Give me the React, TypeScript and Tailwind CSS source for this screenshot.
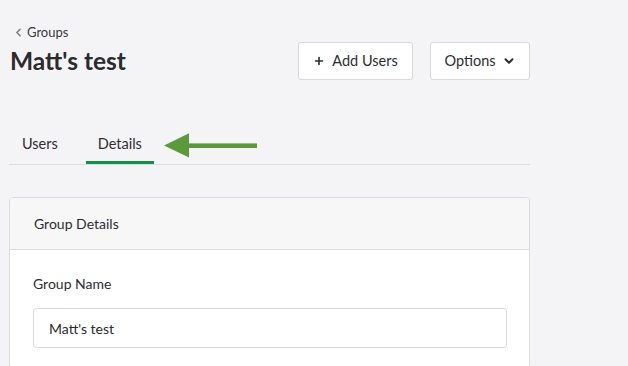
import { ChevronLeft, ChevronDown, Plus } from 'lucide-react';

function PointerArrow() {
  return (
    <svg width="94" height="26" viewBox="0 0 94 26" className="absolute left-[155px] top-[-1px]">
      <polygon points="0,12.4 25,0.3 25,24.4" fill="#5b9a3b" />
      <rect x="24" y="10.4" width="69" height="4.6" fill="#5b9a3b" />
    </svg>
  );
}

export default function App() {
  return (
    <div className="min-h-[366px] w-full bg-[#f4f4f6] pl-[9px] pt-[24px] text-[#2d2d2f] font-['Lato','Liberation_Sans',sans-serif]">
      <div className="w-[521px]">
        {/* Page header */}
        <div className="flex items-start justify-between">
          <div>
            <div className="flex h-[16px] items-center pl-[3px] text-[13px] leading-4 text-[#3a3a3c]">
              <ChevronLeft size={13} strokeWidth={3} className="mr-[2px] text-[#808084]" />
              Groups
            </div>
            <h1 className="mt-[6px] text-[24.5px] font-bold leading-[30px] pl-px text-[#2b2b2d]">Matt's test</h1>
          </div>
          <div className="mt-[18px] flex gap-[17px]">
            <button className="flex h-[38px] w-[115px] items-center justify-center gap-[7px] rounded-[3px] border border-[#d9d9dc] bg-white text-[14.5px] text-[#2d2d2f]">
              <Plus size={12} strokeWidth={3.2} />
              Add Users
            </button>
            <button className="flex h-[38px] w-[100px] items-center justify-center gap-[6px] rounded-[3px] border border-[#d9d9dc] bg-white text-[14.5px] text-[#2d2d2f]">
              Options
              <ChevronDown size={14} strokeWidth={3.4} />
            </button>
          </div>
        </div>

        {/* Tabs */}
        <div className="relative mt-[54px] flex gap-[16px] border-b border-[#dcdcdf] pl-px">
          <button className="border-b-[3px] border-transparent px-3 pb-[7px] text-[14.5px] leading-5 text-[#2d2d2f]">Users</button>
          <button className="border-b-[3px] border-[#0b9444] px-3 pb-[7px] text-[14.5px] leading-5 text-[#2d2d2f]">Details</button>
          <PointerArrow />
        </div>

        {/* Details card */}
        <div className="mt-[32px] overflow-hidden rounded-[4px] border border-[#dcdcdf] bg-white">
          <div className="flex h-[52px] items-center border-b border-[#dcdcdf] bg-[#f7f7f8] px-[24px] text-[14px]">
            Group Details
          </div>
          <div className="pl-[23px] pr-[22px] pt-[24px] pb-[20px]">
            <div className="text-[14px] leading-5">Group Name</div>
            <div className="mt-[14px] flex h-[40px] items-center rounded-[3px] border border-[#d9d9dc] px-[15px] text-[14px] text-[#2b2b2d]">
              Matt's test
            </div>
          </div>
        </div>
      </div>
    </div>
  );
}
